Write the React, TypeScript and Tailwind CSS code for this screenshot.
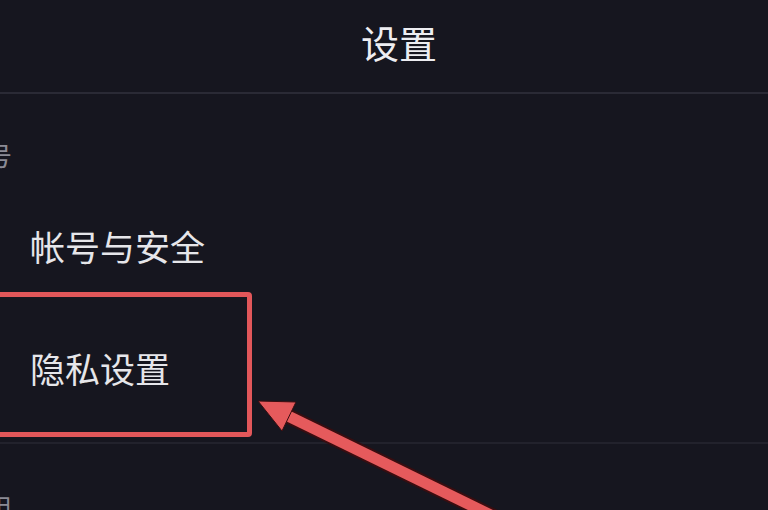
export default function App() {
	return (
		<div className="relative w-[768px] h-[510px] overflow-hidden bg-[#16161f] font-['Noto_Sans_CJK_SC',sans-serif]">
			<header className="h-[94px] flex items-center justify-center border-b-2 border-[#2a2a35] pb-[8px] pl-[30px]">
				<h1 className="text-[38px] leading-none text-[#ededf1]">设置</h1>
			</header>

			<div className="h-[122px] flex items-center">
				<p className="-ml-[40px] text-[26px] leading-none text-[#8b8b95]">帐号</p>
			</div>

			<div className="h-[76px] flex items-center pb-[18px] pl-[30px]">
				<span className="text-[35px] leading-none text-[#e6e6ea]">帐号与安全</span>
			</div>

			<div className="h-[145px] w-[272px] -ml-[20px] flex items-center pt-[5px] pl-[45px] border-[5px] border-[#e2575a] rounded-[4px]">
				<span className="text-[35px] leading-none text-[#e6e6ea]">隐私设置</span>
			</div>

			<div className="mt-[5px] border-b-2 border-[#22222c]" />

			<div className="pt-[50px]">
				<p className="-ml-[40px] text-[26px] leading-none text-[#8b8b95]">通用</p>
			</div>

			{/* annotation arrow */}
			<svg className="absolute inset-0 pointer-events-none" width="768" height="510" viewBox="0 0 768 510">
				<line x1="286" y1="415" x2="505" y2="522" stroke="#3a0d10" strokeWidth="15" />
				<line x1="286" y1="415" x2="505" y2="522" stroke="#e55a5c" strokeWidth="11" />
				<polygon points="258,401 296,402 282,431" fill="#e55a5c" stroke="#3a0d10" strokeWidth="1" />
			</svg>
		</div>
	);
}
